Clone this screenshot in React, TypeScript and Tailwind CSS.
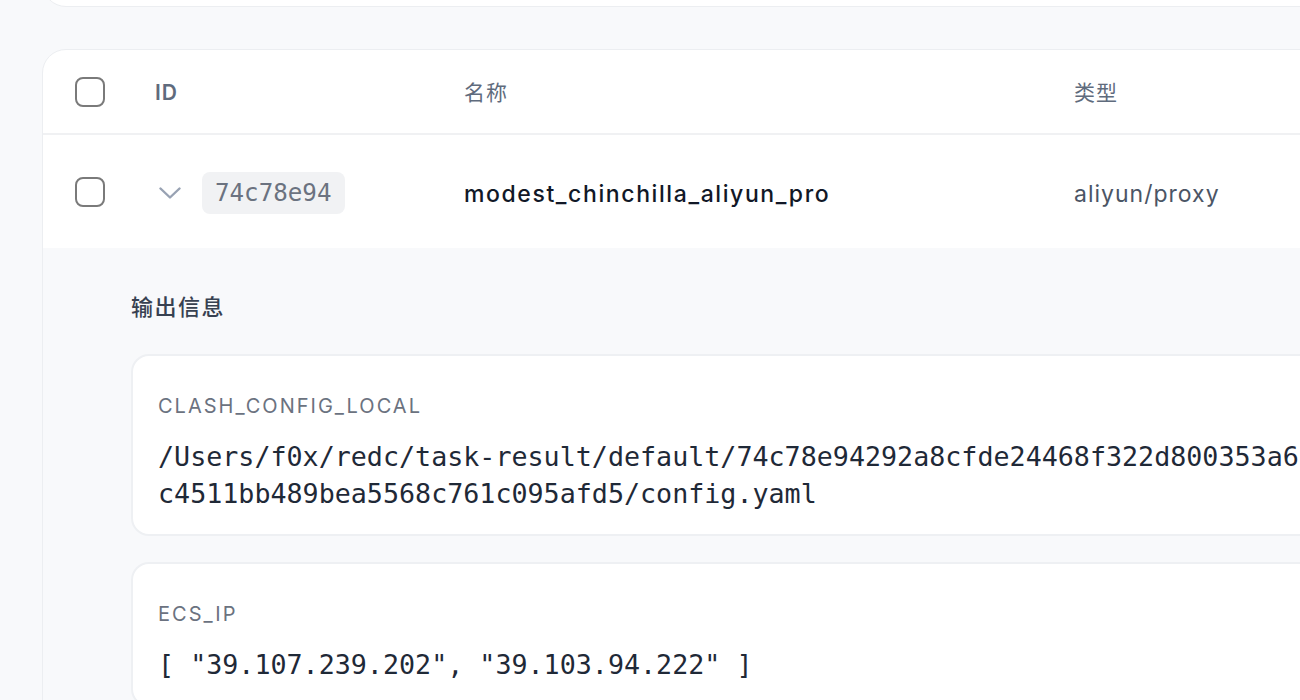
const SANS = "font-['Inter','Noto_Sans_CJK_SC',sans-serif]";
const MONO = "font-['DejaVu_Sans_Mono','Noto_Sans_CJK_SC',monospace]";

const outputs = [
  {
    key: "CLASH_CONFIG_LOCAL",
    value:
      "/Users/f0x/redc/task-result/default/74c78e94292a8cfde24468f322d800353a6c4511bb489bea5568c761c095afd5/config.yaml",
  },
  { key: "ECS_IP", value: '[ "39.107.239.202", "39.103.94.222" ]' },
];

function Checkbox() {
  return <div className="h-[30px] w-[30px] rounded-[8px] border-[2.5px] border-[#7a7a7a] bg-white" />;
}

export default function App() {
  return (
    <div className={`min-h-[700px] overflow-hidden bg-[#f8f9fb] pl-[42px] ${SANS}`}>
      {/* previous panel, only its bottom edge shows */}
      <div className="-mt-[60px] h-[67px] w-[1400px] rounded-[24px] border border-[#eceef1] bg-white" />

      <div className="mt-[42px] w-[1400px] rounded-tl-[24px] border border-[#eceef1] bg-white">
        {/* header */}
        <div className="flex h-[85px] items-center border-b-2 border-[#f0f1f3]">
          <div className="flex w-[112px] pl-[32px]">
            <Checkbox />
          </div>
          <div className="w-[309px] pt-[2px] text-[21px] font-semibold tracking-[1px] text-[#5f6b7d]">ID</div>
          <div className="w-[610px] pt-[2px] text-[21px] tracking-[1px] text-[#5f6b7d]">名称</div>
          <div className="pt-[2px] text-[21px] tracking-[1px] text-[#5f6b7d]">类型</div>
        </div>

        {/* row */}
        <div className="flex h-[113px] items-center">
          <div className="flex w-[112px] pl-[32px] pt-[1px]">
            <Checkbox />
          </div>
          <div className="flex w-[309px] items-center pt-[3px]">
            <svg width="22" height="12" viewBox="0 0 22 12" className="ml-[4px] mr-[21px]">
              <polyline points="1.5,1.5 11,10.5 20.5,1.5" fill="none" stroke="#98a2b3" strokeWidth="2.4" strokeLinecap="round" strokeLinejoin="round" />
            </svg>
            <span className={`rounded-[8px] bg-[#f1f2f4] px-[13px] py-[7px] text-[24.2px] leading-[28px] text-[#6b7280] ${MONO}`}>
              74c78e94
            </span>
          </div>
          <div className="w-[610px] pt-[5px] text-[23px] font-medium tracking-[1.6px] text-[#111827]">
            modest_chinchilla_aliyun_pro
          </div>
          <div className="pt-[5px] text-[23px] tracking-[1px] text-[#4b5565]">aliyun/proxy</div>
        </div>

        {/* expanded output */}
        <div className="bg-[#f8f9fb] pl-[88px] pt-[45px]">
          <div className="text-[22px] font-medium leading-[28px] tracking-[1.5px] text-[#374151]">输出信息</div>
          <div className="mt-[33px] flex flex-col gap-[26px]">
            {outputs.map((o) => (
              <div key={o.key} className="rounded-[18px] border-2 border-[#eef0f3] bg-white pb-[22px] pl-[25px] pt-[36px]">
                <div className="text-[20px] uppercase leading-[28px] tracking-[2px] text-[#6b7280]">{o.key}</div>
                <div className={`mt-[18px] w-[1145px] break-all text-[26.7px] leading-[37px] text-[#1f2937] ${MONO}`}>
                  {o.value}
                </div>
              </div>
            ))}
          </div>
        </div>
      </div>
    </div>
  );
}
